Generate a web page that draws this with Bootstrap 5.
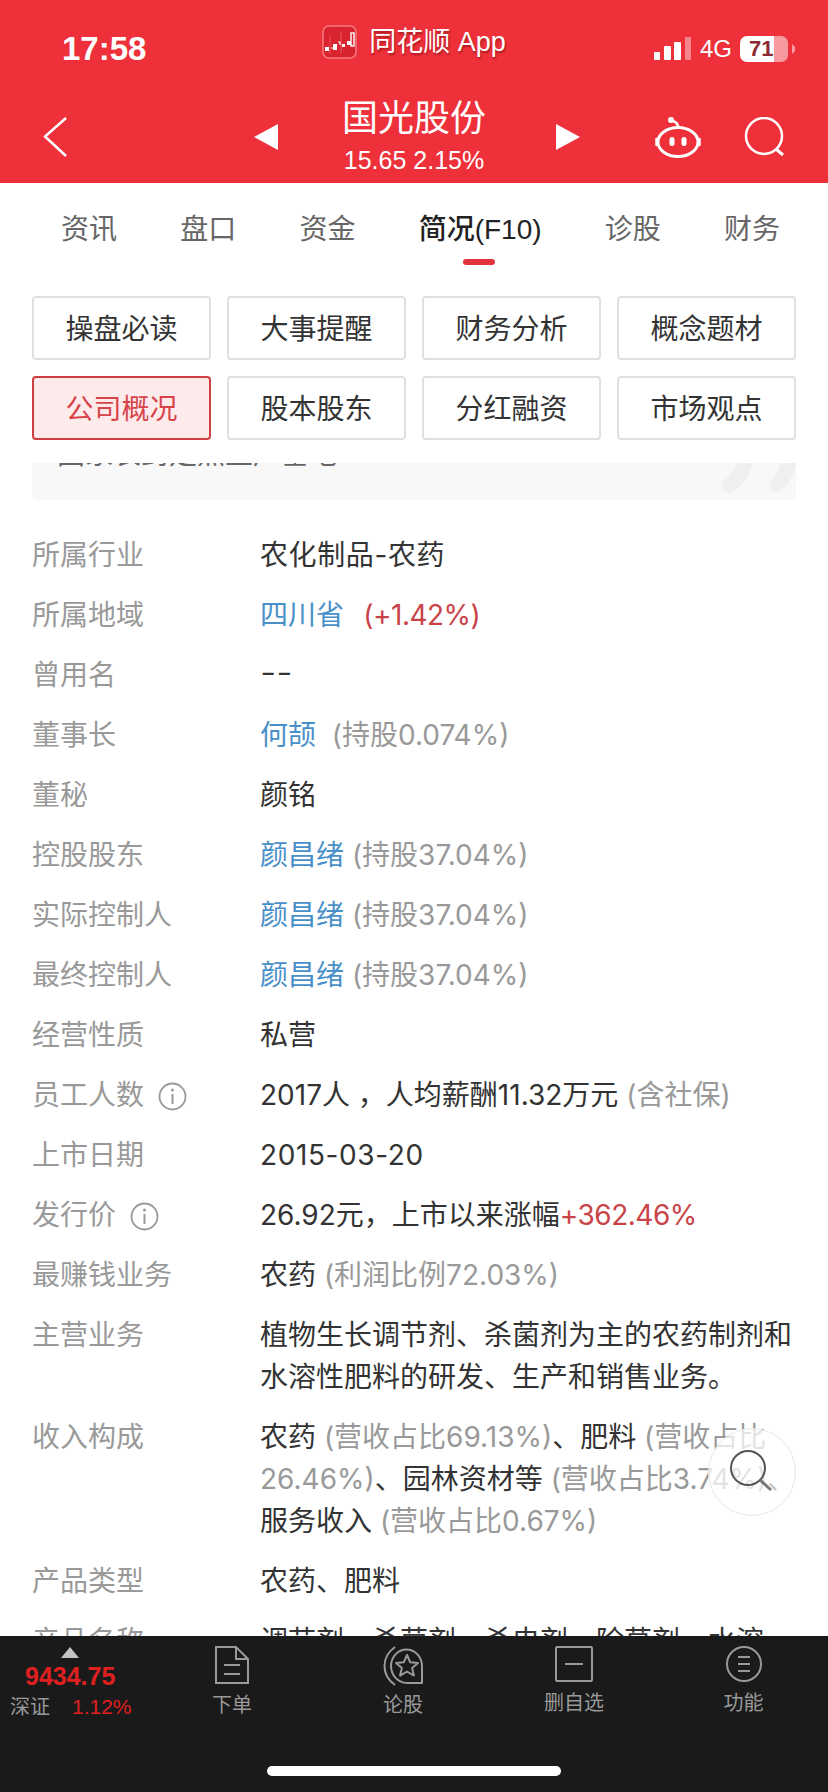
<!DOCTYPE html>
<html lang="zh-CN">

<head>
    <meta charset="UTF-8" />
    <meta name="viewport" content="width=device-width, initial-scale=1.0" />
    <title>国光股份 | 同花顺</title>
    <link rel="stylesheet" href="https://cdn.jsdelivr.net/npm/bootstrap@5.3.0/dist/css/bootstrap.min.css" />
    <style>
        body {
            margin: 0;
            background: #fff;
            font-family: "Liberation Sans", "Noto Sans CJK SC", sans-serif;
        }

        .phone {
            position: relative;
            width: 828px;
            height: 1792px;
            overflow: hidden;
        }

        /* red header */
        .top-head {
            height: 183px;
            background: #ee303a;
            color: #fff;
        }

        .status-row {
            display: grid;
            grid-template-columns: 1fr auto 1fr;
            padding: 25px 33px 0;
            height: 98px;
        }

        .clock {
            font-size: 33px;
            font-weight: 700;
            line-height: 36px;
            margin: 6px 0 0 29px;
        }

        .app-name {
            font-size: 27px;
            line-height: 34px;
            gap: 12px;
            text-shadow: 1px 2px 2px rgba(90, 0, 0, .45);
        }

        .sig-box {
            height: 26px;
            margin-top: 11px;
        }

        .net-text {
            font-size: 24px;
            line-height: 26px;
            margin: 0 8px;
        }

        .batt {
            width: 48px;
            height: 26px;
            border-radius: 7px;
            background: linear-gradient(90deg, #fff 71%, #f79aa0 71%);
            color: #8c2a34;
            font-size: 22px;
            font-weight: 700;
            line-height: 26px;
            padding-left: 9px;
        }

        .title-row {
            display: grid;
            grid-template-columns: 1fr auto 1fr;
            align-items: center;
            padding: 1px 37px 0 43px;
        }

        .title-mid {
            gap: 64px;
        }

        .tri-next {
            margin-left: 6px;
        }

        .head-tools {
            gap: 42px;
            margin-right: 3px;
        }

        .stock-name {
            font-size: 36px;
            line-height: 40px;
            text-align: center;
        }

        .stock-sub {
            font-size: 25px;
            line-height: 30px;
            margin-top: 6px;
            text-align: center;
            white-space: nowrap;
        }

        /* tabs */
        .tab-row {
            height: 113px;
            padding: 30px 48px 0 61px;
        }

        .tab-item {
            position: relative;
            font-size: 28px;
            line-height: 34px;
            color: #666;
            height: 34px;
        }

        .tab-on {
            color: #222;
            font-weight: 500;
        }

        .tab-on::after {
            content: "";
            position: absolute;
            left: 44px;
            top: 46px;
            width: 32px;
            height: 6px;
            border-radius: 3px;
            background: #e2333c;
        }

        /* function buttons */
        .fn-grid {
            display: grid;
            grid-template-columns: repeat(4, 179px);
            gap: 16px;
            padding: 0 32px;
        }

        .fn-btn {
            height: 64px;
            padding: 3px 0 0;
            font-size: 28px;
            line-height: 56px;
            color: #333;
            background: #fff;
            border: 2px solid #e0e0e0;
            border-radius: 4px;
        }

        .fn-on {
            color: #d8434a;
            background: #fdeaea;
            border-color: #cf3f44;
        }

        /* scrolled content */
        .scroll-area {
            height: 1173px;
            margin-top: 23px;
            overflow: hidden;
        }

        .clip-box {
            position: relative;
            height: 37px;
            margin: 0 32px 35px;
            padding-left: 25px;
            overflow: hidden;
            background: #f8f8f8;
            border-radius: 0 0 6px 6px;
            font-size: 28px;
            line-height: 30px;
            color: #666;
        }

        .clip-text {
            margin-top: -23px;
        }

        .clip-quote {
            position: absolute;
            top: 0;
            right: 0;
        }

        .info-row {
            display: flex;
            padding: 0 32px;
            margin-bottom: 18px;
            font-size: 28px;
            line-height: 42px;
        }

        .info-key {
            flex: 0 0 228px;
            color: #999;
        }

        .info-val {
            flex: 1;
            margin: -1px 0 1px;
            color: #333;
            font-family: Inter, "Noto Sans CJK SC", sans-serif;
        }

        .tip-icon {
            margin-left: 14px;
            vertical-align: -6px;
        }

        .blue-txt {
            color: #4a90c8;
        }

        .red-txt {
            color: #c94448;
            letter-spacing: -.5px;
        }

        .gray-txt {
            color: #999;
        }

        .wide-dash {
            letter-spacing: .6px;
        }

        .empty-dash {
            font-size: 36px;
            font-weight: 300;
            line-height: 1;
        }

        /* floating search */
        .float-search {
            position: absolute;
            left: 708px;
            top: 1428px;
            width: 88px;
            height: 88px;
            border-radius: 50%;
            border: 1px solid #e6e6e6;
            background: rgba(255, 255, 255, .72);
        }

        /* bottom bar */
        .bottom-bar {
            height: 156px;
            background: #1a1a1a;
            color: #999;
        }

        .bar-grid {
            display: grid;
            grid-template-columns: 147px 170px 172px 170px 169px;
            height: 130px;
        }

        .index-box {
            padding: 11px 0 0 10px;
            line-height: 1;
        }

        .index-up {
            width: 0;
            height: 0;
            margin: 0 0 6px 51px;
            border-left: 9px solid transparent;
            border-right: 9px solid transparent;
            border-bottom: 11px solid #c4c4c4;
        }

        .index-num {
            font-size: 25px;
            font-weight: 700;
            color: #e0201f;
            margin-left: 15px;
            line-height: 24px;
        }

        .index-name {
            font-size: 20px;
            line-height: 30px;
            margin-top: 4px;
        }

        .index-pct {
            font-size: 21px;
            color: #e0201f;
            margin-left: 22px;
        }

        .bar-item {
            padding-top: 10px;
            font-size: 20px;
            line-height: 28px;
            text-align: center;
        }

        .bar-item svg {
            display: block;
            margin: 0 auto 7px;
        }

        .bar-item .stock-ico {
            margin-bottom: 5px;
        }

        .home-bar {
            width: 294px;
            height: 10px;
            margin: 0 auto;
            border-radius: 5px;
            background: #fff;
        }
    </style>
</head>

<body>
    <div class="phone d-flex flex-column">
        <!-- Header -->
        <div class="top-head">
            <div class="status-row">
                <div class="clock">17:58</div>
                <div class="app-name d-flex align-items-start">
                    <svg width="35" height="34" viewBox="0 0 35 34">
                        <rect x="1" y="1" width="33" height="32" rx="6" fill="#d9232e" stroke="#f47a80" stroke-width="1.500" />
                        <path d="M8 11v18M19 6v22" stroke="#e9545c" stroke-width="1" />
                        <rect x="3" y="22" width="4" height="4" fill="#fff" />
                        <path d="M11 19h4v6h-4zM20 19h3v3h-3zM25 16h4v4h-4z" fill="#fff" />
                        <path d="M9 23h2M16 17h2v3" stroke="#fff" stroke-width="1.200" fill="none" />
                        <rect x="29" y="8" width="3" height="13" fill="none" stroke="#fff" stroke-width="1.400" />
                    </svg>
                    <span>同花顺 App</span>
                </div>
                <div class="sig-box d-flex justify-content-end align-items-center">
                    <svg width="38" height="24" viewBox="0 0 38 24">
                        <rect x="0" y="15" width="6" height="8" rx="1" fill="#fff" />
                        <rect x="10" y="9" width="7" height="14" rx="1" fill="#fff" />
                        <rect x="20" y="5" width="7" height="18" rx="1" fill="#fff" />
                        <rect x="31" y="0" width="6" height="23" rx="1" fill="#f7858c" />
                    </svg>
                    <span class="net-text">4G</span>
                    <div class="batt">71</div>
                    <svg class="ms-1" width="3" height="10">
                        <path d="M0 0l3 3v4l-3 3z" fill="#f79aa0" />
                    </svg>
                </div>
            </div>
            <div class="title-row">
                <svg width="24" height="40" viewBox="0 0 24 40">
                    <path d="M23 1 2 19.500 23 39" fill="none" stroke="#fff" stroke-width="2.500" />
                </svg>
                <div class="title-mid d-flex align-items-center">
                    <svg width="24" height="26" viewBox="0 0 24 26">
                        <path d="M24 0v26L0 13z" fill="#fff" />
                    </svg>
                    <div>
                        <div class="stock-name">国光股份</div>
                        <div class="stock-sub">15.65 2.15%</div>
                    </div>
                    <svg class="tri-next" width="24" height="26" viewBox="0 0 24 26">
                        <path d="M0 0v26l24-13z" fill="#fff" />
                    </svg>
                </div>
                <div class="head-tools d-flex justify-content-end align-items-center">
                    <svg width="48" height="42" viewBox="0 0 48 42">
                        <circle cx="17" cy="4" r="3" fill="#fff" />
                        <path d="M19 5c3 1 5 3 5 6" fill="none" stroke="#fff" stroke-width="2.500" />
                        <ellipse cx="24" cy="26" rx="20" ry="14.500" fill="none" stroke="#fff" stroke-width="3" />
                        <path d="M2.500 23v6M45.500 23v6" stroke="#fff" stroke-width="2.500" stroke-linecap="round" />
                        <rect x="15.500" y="21" width="5" height="9" rx="2.500" fill="#fff" />
                        <rect x="27.500" y="21" width="5" height="9" rx="2.500" fill="#fff" />
                    </svg>
                    <svg width="44" height="40" viewBox="0 0 44 40">
                        <circle cx="20" cy="19" r="18" fill="none" stroke="#fff" stroke-width="2.500" />
                        <path d="M32 32l7 6" stroke="#fff" stroke-width="3" />
                    </svg>
                </div>
            </div>
        </div>

        <!-- Tabs -->
        <div class="tab-row d-flex justify-content-between">
            <div class="tab-item">资讯</div>
            <div class="tab-item">盘口</div>
            <div class="tab-item">资金</div>
            <div class="tab-item tab-on">简况(F10)</div>
            <div class="tab-item">诊股</div>
            <div class="tab-item">财务</div>
        </div>

        <!-- Function buttons -->
        <div class="fn-grid">
            <button class="btn fn-btn">操盘必读</button>
            <button class="btn fn-btn">大事提醒</button>
            <button class="btn fn-btn">财务分析</button>
            <button class="btn fn-btn">概念题材</button>
            <button class="btn fn-btn fn-on">公司概况</button>
            <button class="btn fn-btn">股本股东</button>
            <button class="btn fn-btn">分红融资</button>
            <button class="btn fn-btn">市场观点</button>
        </div>

        <!-- Company info -->
        <div class="scroll-area flex-grow-1">
            <div class="clip-box">
                <div class="clip-text">国家农药定点生产基地</div>
                <svg class="clip-quote" width="82" height="30" viewBox="0 0 82 30">
                    <path d="M24 0h15c-3 12-10 24-22 29-7 1-11-3-9-10 6-4 12-11 16-19zM67 0h15v2c-3 12-9 22-18 27-6 1-9-3-8-9 5-5 8-12 11-20z" fill="#efefef" />
                </svg>
            </div>
            <div class="info-row"><div class="info-key">所属行业</div><div class="info-val wide-dash">农化制品-农药</div></div>
            <div class="info-row"><div class="info-key">所属地域</div><div class="info-val"><span class="blue-txt">四川省</span> <span class="red-txt ms-1">&nbsp;(+1.42%)</span></div></div>
            <div class="info-row"><div class="info-key">曾用名</div><div class="info-val"><span class="empty-dash">--</span></div></div>
            <div class="info-row"><div class="info-key">董事长</div><div class="info-val"><span class="blue-txt">何颉</span> <span class="gray-txt">&nbsp;(持股0.074%)</span></div></div>
            <div class="info-row"><div class="info-key">董秘</div><div class="info-val">颜铭</div></div>
            <div class="info-row"><div class="info-key">控股股东</div><div class="info-val"><span class="blue-txt">颜昌绪</span> <span class="gray-txt">(持股37.04%)</span></div></div>
            <div class="info-row"><div class="info-key">实际控制人</div><div class="info-val"><span class="blue-txt">颜昌绪</span> <span class="gray-txt">(持股37.04%)</span></div></div>
            <div class="info-row"><div class="info-key">最终控制人</div><div class="info-val"><span class="blue-txt">颜昌绪</span> <span class="gray-txt">(持股37.04%)</span></div></div>
            <div class="info-row"><div class="info-key">经营性质</div><div class="info-val">私营</div></div>
            <div class="info-row">
                <div class="info-key">员工人数<svg class="tip-icon" width="29" height="29" viewBox="0 0 29 29">
                        <circle cx="14.500" cy="14.500" r="13" fill="none" stroke="#999" stroke-width="1.800" />
                        <path d="M14.500 12v10" stroke="#999" stroke-width="2" />
                        <circle cx="14.500" cy="8" r="1.500" fill="#999" />
                    </svg></div>
                <div class="info-val">2017人 ，人均薪酬11.32万元 <span class="gray-txt">(含社保)</span></div>
            </div>
            <div class="info-row"><div class="info-key">上市日期</div><div class="info-val wide-dash">2015-03-20</div></div>
            <div class="info-row">
                <div class="info-key">发行价<svg class="tip-icon" width="29" height="29" viewBox="0 0 29 29">
                        <circle cx="14.500" cy="14.500" r="13" fill="none" stroke="#999" stroke-width="1.800" />
                        <path d="M14.500 12v10" stroke="#999" stroke-width="2" />
                        <circle cx="14.500" cy="8" r="1.500" fill="#999" />
                    </svg></div>
                <div class="info-val">26.92元，上市以来涨幅<span class="red-txt">+362.46%</span></div>
            </div>
            <div class="info-row"><div class="info-key">最赚钱业务</div><div class="info-val">农药 <span class="gray-txt">(利润比例72.03%)</span></div></div>
            <div class="info-row"><div class="info-key">主营业务</div><div class="info-val">植物生长调节剂、杀菌剂为主的农药制剂和水溶性肥料的研发、生产和销售业务。</div></div>
            <div class="info-row"><div class="info-key">收入构成</div><div class="info-val">农药 <span class="gray-txt">(营收占比69.13%)</span>、肥料 <span class="gray-txt">(营收占比26.46%)</span>、园林资材等 <span class="gray-txt">(营收占比3.74%)</span>、服务收入 <span class="gray-txt">(营收占比0.67%)</span></div></div>
            <div class="info-row"><div class="info-key">产品类型</div><div class="info-val">农药、肥料</div></div>
            <div class="info-row"><div class="info-key">产品名称</div><div class="info-val">调节剂、杀菌剂、杀虫剂、除草剂、水溶</div></div>
        </div>

        <!-- Bottom bar -->
        <div class="bottom-bar">
            <div class="bar-grid">
                <div class="index-box">
                    <div class="index-up"></div>
                    <div class="index-num">9434.75</div>
                    <div class="index-name">深证<span class="index-pct">1.12%</span></div>
                </div>
                <div class="bar-item">
                    <svg width="36" height="38" viewBox="0 0 36 38" fill="none" stroke="#999" stroke-width="2">
                        <path d="M2 1h20l12 12v24H2zM22 1v12h12M10 19h16M10 28h16" />
                    </svg>下单
                </div>
                <div class="bar-item">
                    <svg class="stock-ico" width="42" height="40" viewBox="0 0 42 40" fill="none" stroke="#999" stroke-width="2">
                        <path d="M13 1C-1 11-1 29 13 39" />
                        <path d="M40 37V20a15.500 16.500 0 0 0-31 0c0 9 7 17 16 17z" stroke-linejoin="round" />
                        <path d="M25 9l3.200 7.300 7.800.6-5.900 5.100 1.800 7.600-6.900-4.100-6.900 4.100 1.800-7.600-5.900-5.100 7.800-.6z" stroke-linejoin="round" />
                    </svg>论股
                </div>
                <div class="bar-item">
                    <svg width="38" height="36" viewBox="0 0 38 36" fill="none" stroke="#999" stroke-width="2">
                        <rect x="1" y="1" width="36" height="34" rx="1" />
                        <path d="M10 18h18" />
                    </svg>删自选
                </div>
                <div class="bar-item">
                    <svg width="36" height="36" viewBox="0 0 36 36" fill="none" stroke="#999" stroke-width="2">
                        <circle cx="18" cy="18" r="17" />
                        <path d="M12 11h12M12 18h12M12 25h12" />
                    </svg>功能
                </div>
            </div>
            <div class="home-bar"></div>
        </div>

        <!-- Floating search -->
        <div class="float-search d-flex align-items-center justify-content-center">
            <svg width="46" height="46" viewBox="0 0 46 46" fill="none">
                <circle cx="19" cy="19" r="17" stroke="#555" stroke-width="2" />
                <path d="M31 31l11 10" stroke="#777" stroke-width="3" />
            </svg>
        </div>
    </div>

    <script src="https://cdn.jsdelivr.net/npm/bootstrap@5.3.0/dist/js/bootstrap.bundle.min.js"></script>
</body>

</html>
